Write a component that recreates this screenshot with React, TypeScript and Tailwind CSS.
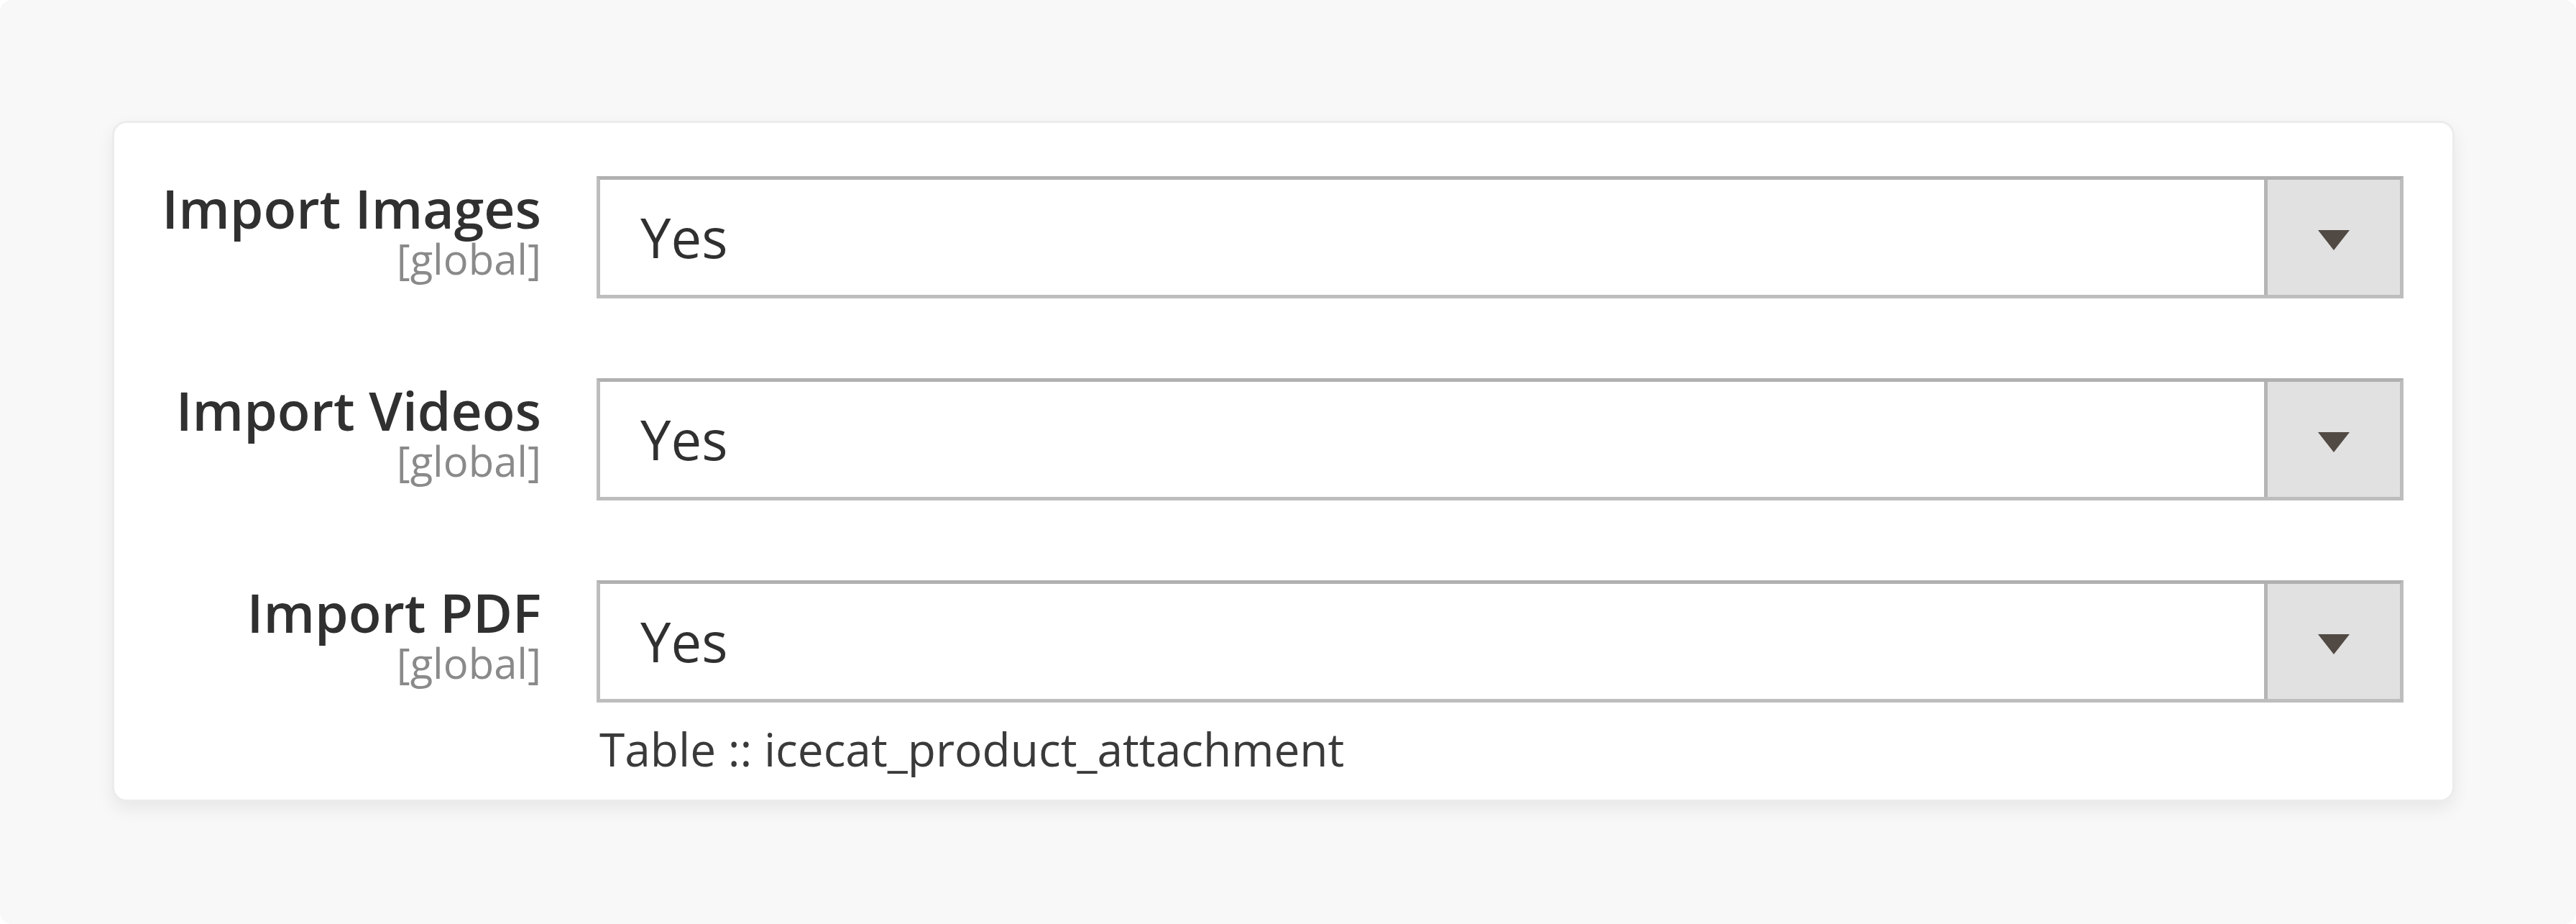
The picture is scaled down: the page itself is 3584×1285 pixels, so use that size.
import React from 'react';

const rows = [
  { label: 'Import Images', value: 'Yes' },
  { label: 'Import Videos', value: 'Yes' },
  { label: 'Import PDF', value: 'Yes' },
];

const SelectBox = ({ value }: { value: string }) => (
  <div className="flex h-[170px] w-full shrink-0 border-[5px] border-[#bdbdbd] border-t-[#b0b0b0] bg-white">
    <div className="flex flex-1 items-center pl-[56px] text-[76px] text-[#303030]">{value}</div>
    <div className="flex w-[189px] items-center justify-center border-l-[5px] border-[#b5b5b5] bg-[#e1e1e1]">
      <span className="mt-[8px] h-0 w-0 border-x-[22px] border-t-[28px] border-x-transparent border-t-[#514943]" />
    </div>
  </div>
);

export default function App() {
  return (
    <div className="bg-white font-['Open_Sans',sans-serif]">
      <div className="flex h-[1285px] w-[3584px] flex-col rounded-[16px] bg-[#f8f8f8] pl-[156px] pr-[169px] pt-[168px]">
        <div className="flex h-[947px] flex-col gap-[111px] rounded-[20px] border-[3px] border-[#ececec] bg-white pr-[68px] pt-[74px] shadow-[0_10px_24px_rgba(0,0,0,0.07)]">
          {rows.map((row, i) => (
            <div key={row.label} className="flex gap-[77px]">
              <div className="flex w-[594px] shrink-0 flex-col items-end pt-[4px] text-right">
                <span className="text-[75px] font-semibold leading-[80px] text-[#303030]">{row.label}</span>
                <span className="text-[58px] leading-[62px] text-[#8a8a8a]">[global]</span>
              </div>
              <div className="flex flex-1 flex-col">
                <SelectBox value={row.value} />
                {i === rows.length - 1 && (
                  <p className="mt-[21px] pl-[4px] text-[64px] leading-[87px] text-[#3a3a3a]">
                    Table :: icecat_product_attachment
                  </p>
                )}
              </div>
            </div>
          ))}
        </div>
      </div>
    </div>
  );
}
